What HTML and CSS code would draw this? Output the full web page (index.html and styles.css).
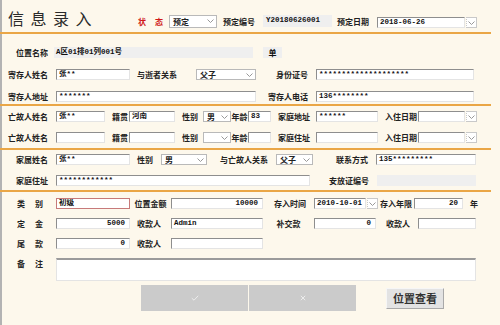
FILE: index.html
```html
<!DOCTYPE html>
<html>
	<head>
		<meta charset="utf-8">
		<title>信息录入</title>
		<link rel="stylesheet" href="styles.css">
	</head>
	<body>
		<div class="page">
			<div class="head">
				<div class="title">信息录入</div>
				<span class="state">状态</span>
				<span class="sel sel-state">预定<svg class="chev" viewBox="0 0 7 4" width="7" height="4"><path d="M.5 .5 3.5 3.5 6.5 .5"/></svg></span>
				<span class="lb hl">预定编号</span>
				<span class="in ro code">Y20180626001</span>
				<span class="lb hl">预定日期</span>
				<span class="date date-head"><span class="in">2018-06-26</span><span class="dbtn"><svg class="chev" viewBox="0 0 7 4" width="7" height="4"><path d="M.5 .5 3.5 3.5 6.5 .5"/></svg></span></span>
			</div>

			<!-- 寄存人 -->
			<div class="sec s1">
				<div class="row g-pos">
					<span class="lb r">位置名称</span>
					<span class="in ro pos">A区01排01列001号</span>
					<span class="in ro unit">单</span>
				</div>
				<div class="row g-jc1">
					<span class="lb r">寄存人姓名</span>
					<span class="in">张**</span>
					<span class="lb">与逝者关系</span>
					<span class="sel">父子<svg class="chev" viewBox="0 0 7 4" width="7" height="4"><path d="M.5 .5 3.5 3.5 6.5 .5"/></svg></span>
					<span class="lb r">身份证号</span>
					<span class="in">********************</span>
				</div>
				<div class="row g-jc2">
					<span class="lb r">寄存人地址</span>
					<span class="in">*******</span>
					<span class="lb r">寄存人电话</span>
					<span class="in">136********</span>
				</div>
			</div>

			<!-- 亡故人 -->
			<div class="sec s2">
				<div class="row g-dead">
					<span class="lb r">亡故人姓名</span>
					<span class="in">张**</span>
					<span class="lb">籍贯</span>
					<span class="in">河南</span>
					<span class="lb">性别</span>
					<span class="sel">男<svg class="chev" viewBox="0 0 7 4" width="7" height="4"><path d="M.5 .5 3.5 3.5 6.5 .5"/></svg></span>
					<span class="lb c">年龄</span>
					<span class="in">83</span>
					<span class="lb">家庭地址</span>
					<span class="in">******</span>
					<span class="lb">入住日期</span>
					<span class="date"><span class="in"></span><span class="dbtn"><svg class="chev" viewBox="0 0 7 4" width="7" height="4"><path d="M.5 .5 3.5 3.5 6.5 .5"/></svg></span></span>
				</div>
				<div class="row g-dead">
					<span class="lb r">亡故人姓名</span>
					<span class="in"></span>
					<span class="lb">籍贯</span>
					<span class="in"></span>
					<span class="lb">性别</span>
					<span class="sel"><svg class="chev" viewBox="0 0 7 4" width="7" height="4"><path d="M.5 .5 3.5 3.5 6.5 .5"/></svg></span>
					<span class="lb c">年龄</span>
					<span class="in"></span>
					<span class="lb">家庭住址</span>
					<span class="in"></span>
					<span class="lb">入住日期</span>
					<span class="date"><span class="in"></span><span class="dbtn"><svg class="chev" viewBox="0 0 7 4" width="7" height="4"><path d="M.5 .5 3.5 3.5 6.5 .5"/></svg></span></span>
				</div>
			</div>

			<!-- 家属 -->
			<div class="sec s3">
				<div class="row g-fam1">
					<span class="lb r">家属姓名</span>
					<span class="in">张**</span>
					<span class="lb">性别</span>
					<span class="sel">男<svg class="chev" viewBox="0 0 7 4" width="7" height="4"><path d="M.5 .5 3.5 3.5 6.5 .5"/></svg></span>
					<span class="lb r">与亡故人关系</span>
					<span class="sel">父子<svg class="chev" viewBox="0 0 7 4" width="7" height="4"><path d="M.5 .5 3.5 3.5 6.5 .5"/></svg></span>
					<span class="lb r">联系方式</span>
					<span class="in">135*********</span>
				</div>
				<div class="row g-fam2">
					<span class="lb r">家庭住址</span>
					<span class="in">************</span>
					<span class="lb r">安放证编号</span>
					<span class="in ro"></span>
				</div>
			</div>

			<!-- 费用 -->
			<div class="sec s4">
				<div class="row g-p1">
					<span class="lb sp">类别</span>
					<span class="in err">初级</span>
					<span class="lb c">位置金额</span>
					<span class="in num">10000</span>
					<span class="lb r">存入时间</span>
					<span class="date"><span class="in">2010-10-01</span><span class="dbtn"><svg class="chev" viewBox="0 0 7 4" width="7" height="4"><path d="M.5 .5 3.5 3.5 6.5 .5"/></svg></span></span>
					<span class="lb c">存入年限</span>
					<span class="in num">20</span>
					<span class="lb">年</span>
				</div>
				<div class="row g-p2">
					<span class="lb sp">定金</span>
					<span class="in num">5000</span>
					<span class="lb">收款人</span>
					<span class="in">Admin</span>
					<span class="lb c">补交款</span>
					<span class="in num">0</span>
					<span class="lb r">收款人</span>
					<span class="in"></span>
				</div>
				<div class="row g-p3">
					<span class="lb sp">尾款</span>
					<span class="in num">0</span>
					<span class="lb">收款人</span>
					<span class="in"></span>
				</div>
				<div class="row g-memo">
					<span class="lb sp">备注</span>
					<span class="memo"></span>
				</div>
			</div>

			<div class="acts">
				<span class="act"><svg class="ico" viewBox="0 0 8 6" width="8" height="6"><path d="M.8 3.2 3 5.2 7.2 .8"/></svg></span>
				<span class="act"><svg class="ico" viewBox="0 0 6 6" width="6" height="6"><path d="M.8 .8 5.2 5.2M5.2 .8 .8 5.2"/></svg></span>
				<span class="look">位置查看</span>
			</div>
		</div>
	</body>
</html>
```

FILE: styles.css
```css
* {
	box-sizing: border-box;
}
body {
	margin: 0;
	background: #fdf8ec;
	font-family: "Noto Sans CJK SC", sans-serif;
	color: #222;
}
.page {
	width: 500px;
	height: 325px;
	overflow: hidden;
	box-shadow: inset 2px 0 #b3b3b3;
}

/* header */
.head {
	display: flex;
	align-items: center;
	width: 491px;
	height: 34px;
	padding-top: 10px;
	border-bottom: 2px solid #eaa646;
}
.title {
	align-self: flex-start;
	margin-left: 8px;
	font-size: 16px;
	line-height: 16px;
	letter-spacing: 6.5px;
	color: #2a2a2a;
}
.state {
	width: 31px;
	margin-left: 40px;
	font-size: 8px;
	font-weight: bold;
	letter-spacing: 9px;
	white-space: nowrap;
	color: #d01818;
}
.sel-state {
	width: 48px;
	height: 13px !important;
}
.lb.hl {
	margin-left: 6px;
	padding-left: 0;
}
.code {
	width: 69px;
	height: 12px !important;
	margin-left: 8px;
	padding-left: 3px !important;
}
.code + .lb.hl {
	margin-left: 5px;
}
.date-head {
	width: 100px;
	margin-left: 8px;
	margin-top: 3px;
}

/* sections */
.sec {
	display: flex;
	flex-direction: column;
	width: 491px;
	border-bottom: 2px solid #eaa646;
}
.s1 {
	gap: 11px;
	padding: 13px 0 2px;
}
.s2 {
	gap: 10px;
	padding: 5px 0;
}
.s3 {
	gap: 10px;
	padding: 4px 0;
}
.s4 {
	gap: 9px;
	padding-top: 6px;
	border-bottom: none;
}
.row {
	display: grid;
	height: 11px;
	align-items: center;
}
.g-pos {
	grid-template-columns: 56px 197px 29px;
}
.g-jc1 {
	grid-template-columns: 56px 74px 66px 60px 60px 158px;
}
.g-jc2 {
	grid-template-columns: 56px 200px 60px 158px;
}
.g-dead {
	grid-template-columns: 56px 49px 24px 46px 28px 28px 17px 23px 45px 62px 40px 59px;
}
.g-fam1 {
	grid-template-columns: 56px 74px 31px 46px 69px 37px 63px 100px;
}
.g-fam2 {
	grid-template-columns: 56px 254px 67px 99px;
}
.g-p1 {
	grid-template-columns: 56px 74px 41px 92px 51px 64px 36px 49px auto;
}
.g-p2 {
	grid-template-columns: 56px 74px 41px 92px 51px 62px 42px 58px;
}
.g-p3 {
	grid-template-columns: 56px 74px 41px 92px;
}
.g-memo {
	grid-template-columns: 56px 420px;
	height: 23px;
	align-items: start;
}

/* labels */
.lb {
	font-size: 8px;
	line-height: 11px;
	font-weight: bold;
	white-space: nowrap;
	padding-left: 7px;
}
.lb.r {
	text-align: right;
	padding-left: 0;
	padding-right: 8px;
}
.lb.c {
	text-align: center;
	padding-left: 0;
}
.lb.sp {
	padding-left: 17px;
	letter-spacing: 10px;
}

/* fields */
.in {
	display: block;
	height: 11px;
	padding: 0 2px;
	background: #fff;
	border: 1px solid;
	border-color: #8e8e8e #e4e4e4 #e4e4e4 #8e8e8e;
	font-family: "Liberation Mono", "Noto Sans CJK SC", monospace;
	font-size: 7.5px;
	font-weight: bold;
	line-height: 9px;
	white-space: nowrap;
	overflow: hidden;
	color: #111;
}
.in.num {
	text-align: right;
	padding-right: 4px;
}
.in.err {
	border-color: #c77a7a;
}
.in.ro {
	background: #efefef;
	border: none;
	line-height: 11px;
}
.pos {
	margin-left: -2px;
	padding-left: 2px;
}
.unit {
	width: 19px;
	margin-left: 10px;
	text-align: center;
	font-family: "Noto Sans CJK SC", sans-serif;
	font-size: 8px;
}
.sel {
	display: flex;
	align-items: center;
	justify-content: space-between;
	height: 11px;
	padding: 0 2px 0 3px;
	background: #fff;
	border: 1px solid #b9b9b9;
	font-size: 8px;
	font-weight: bold;
	line-height: 9px;
	white-space: nowrap;
}
.sel .chev {
	margin-left: auto;
}
.chev {
	fill: none;
	stroke: #999;
	stroke-width: 1;
}
.date {
	display: flex;
	gap: 1px;
	height: 11px;
}
.date .in {
	flex: 1;
}
.dbtn {
	display: flex;
	align-items: center;
	justify-content: center;
	width: 11px;
	background: #fff;
	border: 1px solid #c9c9c9;
	border-left-style: dotted;
}
.memo {
	display: block;
	height: 23px;
	background: #fff;
	border: 1px solid #e4e4e4;
	border-top: 2px solid #9b9b9b;
}

/* buttons */
.acts {
	display: flex;
	align-items: center;
	gap: 1px;
	margin-top: 4px;
	padding-left: 141px;
}
.act {
	display: flex;
	align-items: center;
	justify-content: center;
	width: 107px;
	height: 26px;
	background: #cbcbcb;
}
.ico {
	fill: none;
	stroke: #ececec;
	stroke-width: 1;
}
.look {
	width: 58px;
	height: 21px;
	margin-left: 29px;
	background: #e3e3e3;
	border: 1px solid;
	border-color: #f6f6f6 #a9a9a9 #a9a9a9 #f6f6f6;
	font-size: 11px;
	font-weight: bold;
	line-height: 19px;
	text-align: center;
	color: #333;
}
```
